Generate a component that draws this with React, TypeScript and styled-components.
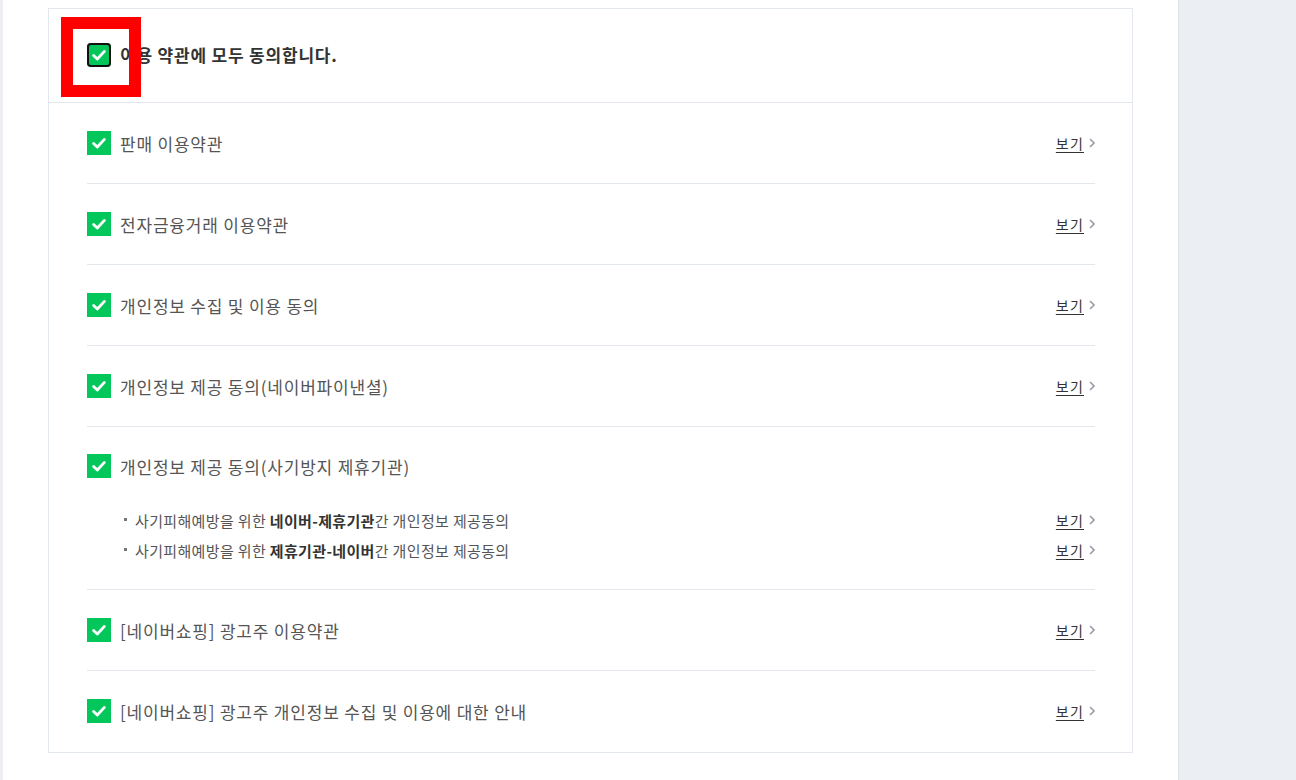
import React from "react";
import styled, { createGlobalStyle } from "styled-components";

const Global = createGlobalStyle`
  html, body { margin: 0; padding: 0; background: #fff; }
  body { font-family: "Noto Sans CJK KR", "Noto Sans", sans-serif; color: #333; }
  * { box-sizing: border-box; }
`;

const Page = styled.div`
  display: flex;
  width: 1296px;
  height: 780px;
  overflow: hidden;
  background: #fff;
`;

const LeftRail = styled.div`
  width: 3px;
  flex: none;
  background: #eceef2;
`;

const Main = styled.main`
  flex: 1;
  padding: 8px 45px 0 45px;
`;

const SidePanel = styled.aside`
  width: 119px;
  flex: none;
  background: #ebeef3;
  border-left: 1px solid #dde0e6;
`;

const Box = styled.section`
  width: 1085px;
  border: 1px solid #e3e7ee;
  background: #fff;
`;

const Header = styled.div`
  position: relative;
  display: flex;
  align-items: center;
  gap: 9px;
  height: 94px;
  padding: 0 38px 2px;
  border-bottom: 1px solid #e3e7ee;
`;

const HeaderLabel = styled.span`
  font-size: 17px;
  font-weight: 700;
  color: #333;
  letter-spacing: 0.8px;
`;

const FocusMark = styled.div`
  position: absolute;
  left: 12px;
  top: 8px;
  width: 80px;
  height: 80px;
  border: 12px solid #ff0000;
  pointer-events: none;
`;

const List = styled.ul`
  list-style: none;
  margin: 0;
  padding: 0 37px 0 38px;
`;

const Row = styled.li<{ $pad: string }>`
  padding: ${(p) => p.$pad};
  border-bottom: 1px solid #e3e7ee;
  &:last-child { border-bottom: none; }
`;

const Line = styled.div`
  display: flex;
  align-items: center;
  height: 24px;
`;

const Label = styled.span`
  flex: 1;
  margin-left: 9px;
  font-size: 17px;
  color: #555;
  letter-spacing: 0.8px;
`;

const Box24 = styled.span<{ $focus?: boolean }>`
  display: inline-flex;
  align-items: center;
  justify-content: center;
  width: 24px;
  height: 24px;
  flex: none;
  background: #03c75a;
  border-radius: ${(p) => (p.$focus ? "4px" : "0")};
  box-shadow: ${(p) => (p.$focus ? "inset 0 0 0 2px #111" : "none")};
`;

const ViewLink = styled.a`
  display: inline-flex;
  align-items: center;
  gap: 5px;
  font-size: 14px;
  color: #333;
  text-decoration: none;
  cursor: pointer;
  & > span {
    text-decoration: underline;
    text-underline-offset: 3px;
    letter-spacing: 1.2px;
  }
`;

const SubList = styled.ul`
  list-style: none;
  margin: 27px 0 0;
  padding: 0 0 0 34px;
`;

const SubItem = styled.li`
  display: flex;
  align-items: center;
  height: 30px;
`;

const SubText = styled.span`
  flex: 1;
  position: relative;
  padding-left: 14px;
  font-size: 15px;
  color: #555;
  letter-spacing: 0.35px;
  &::before {
    content: "";
    position: absolute;
    left: 3px;
    top: 50%;
    width: 3px;
    height: 3px;
    margin-top: -2px;
    background: #777;
  }
  & b { font-weight: 700; color: #333; }
`;

const Check = ({ focus }: { focus?: boolean }) => (
  <Box24 $focus={focus}>
    <svg width="24" height="24" viewBox="0 0 24 24" fill="none">
      <path d="M6.6 12.4 L10.3 16 L17.4 8.4" stroke="#fff" strokeWidth="2.8" strokeLinecap="round" strokeLinejoin="round" />
    </svg>
  </Box24>
);

const View = () => (
  <ViewLink>
    <span>보기</span>
    <svg width="6" height="10" viewBox="0 0 6 10" fill="none">
      <path d="M1 1 L5 5 L1 9" stroke="#9a9ea8" strokeWidth="1.6" />
    </svg>
  </ViewLink>
);

const items = [
  "판매 이용약관",
  "전자금융거래 이용약관",
  "개인정보 수집 및 이용 동의",
  "개인정보 제공 동의(네이버파이낸셜)",
];

export default function App() {
  return (
    <>
      <Global />
      <Page>
        <LeftRail />
        <Main>
          <Box>
            <Header>
              <Check focus />
              <HeaderLabel>이용 약관에 모두 동의합니다.</HeaderLabel>
              <FocusMark />
            </Header>
            <List>
              {items.map((t) => (
                <Row key={t} $pad="28px 0">
                  <Line>
                    <Check />
                    <Label>{t}</Label>
                    <View />
                  </Line>
                </Row>
              ))}
              <Row $pad="27px 0 24px">
                <Line>
                  <Check />
                  <Label>개인정보 제공 동의(사기방지 제휴기관)</Label>
                </Line>
                <SubList>
                  <SubItem>
                    <SubText>
                      사기피해예방을 위한 <b>네이버-제휴기관</b>간 개인정보 제공동의
                    </SubText>
                    <View />
                  </SubItem>
                  <SubItem>
                    <SubText>
                      사기피해예방을 위한 <b>제휴기관-네이버</b>간 개인정보 제공동의
                    </SubText>
                    <View />
                  </SubItem>
                </SubList>
              </Row>
              <Row $pad="28px 0">
                <Line>
                  <Check />
                  <Label>[네이버쇼핑] 광고주 이용약관</Label>
                  <View />
                </Line>
              </Row>
              <Row $pad="28px 0 29px">
                <Line>
                  <Check />
                  <Label>[네이버쇼핑] 광고주 개인정보 수집 및 이용에 대한 안내</Label>
                  <View />
                </Line>
              </Row>
            </List>
          </Box>
        </Main>
        <SidePanel />
      </Page>
    </>
  );
}
